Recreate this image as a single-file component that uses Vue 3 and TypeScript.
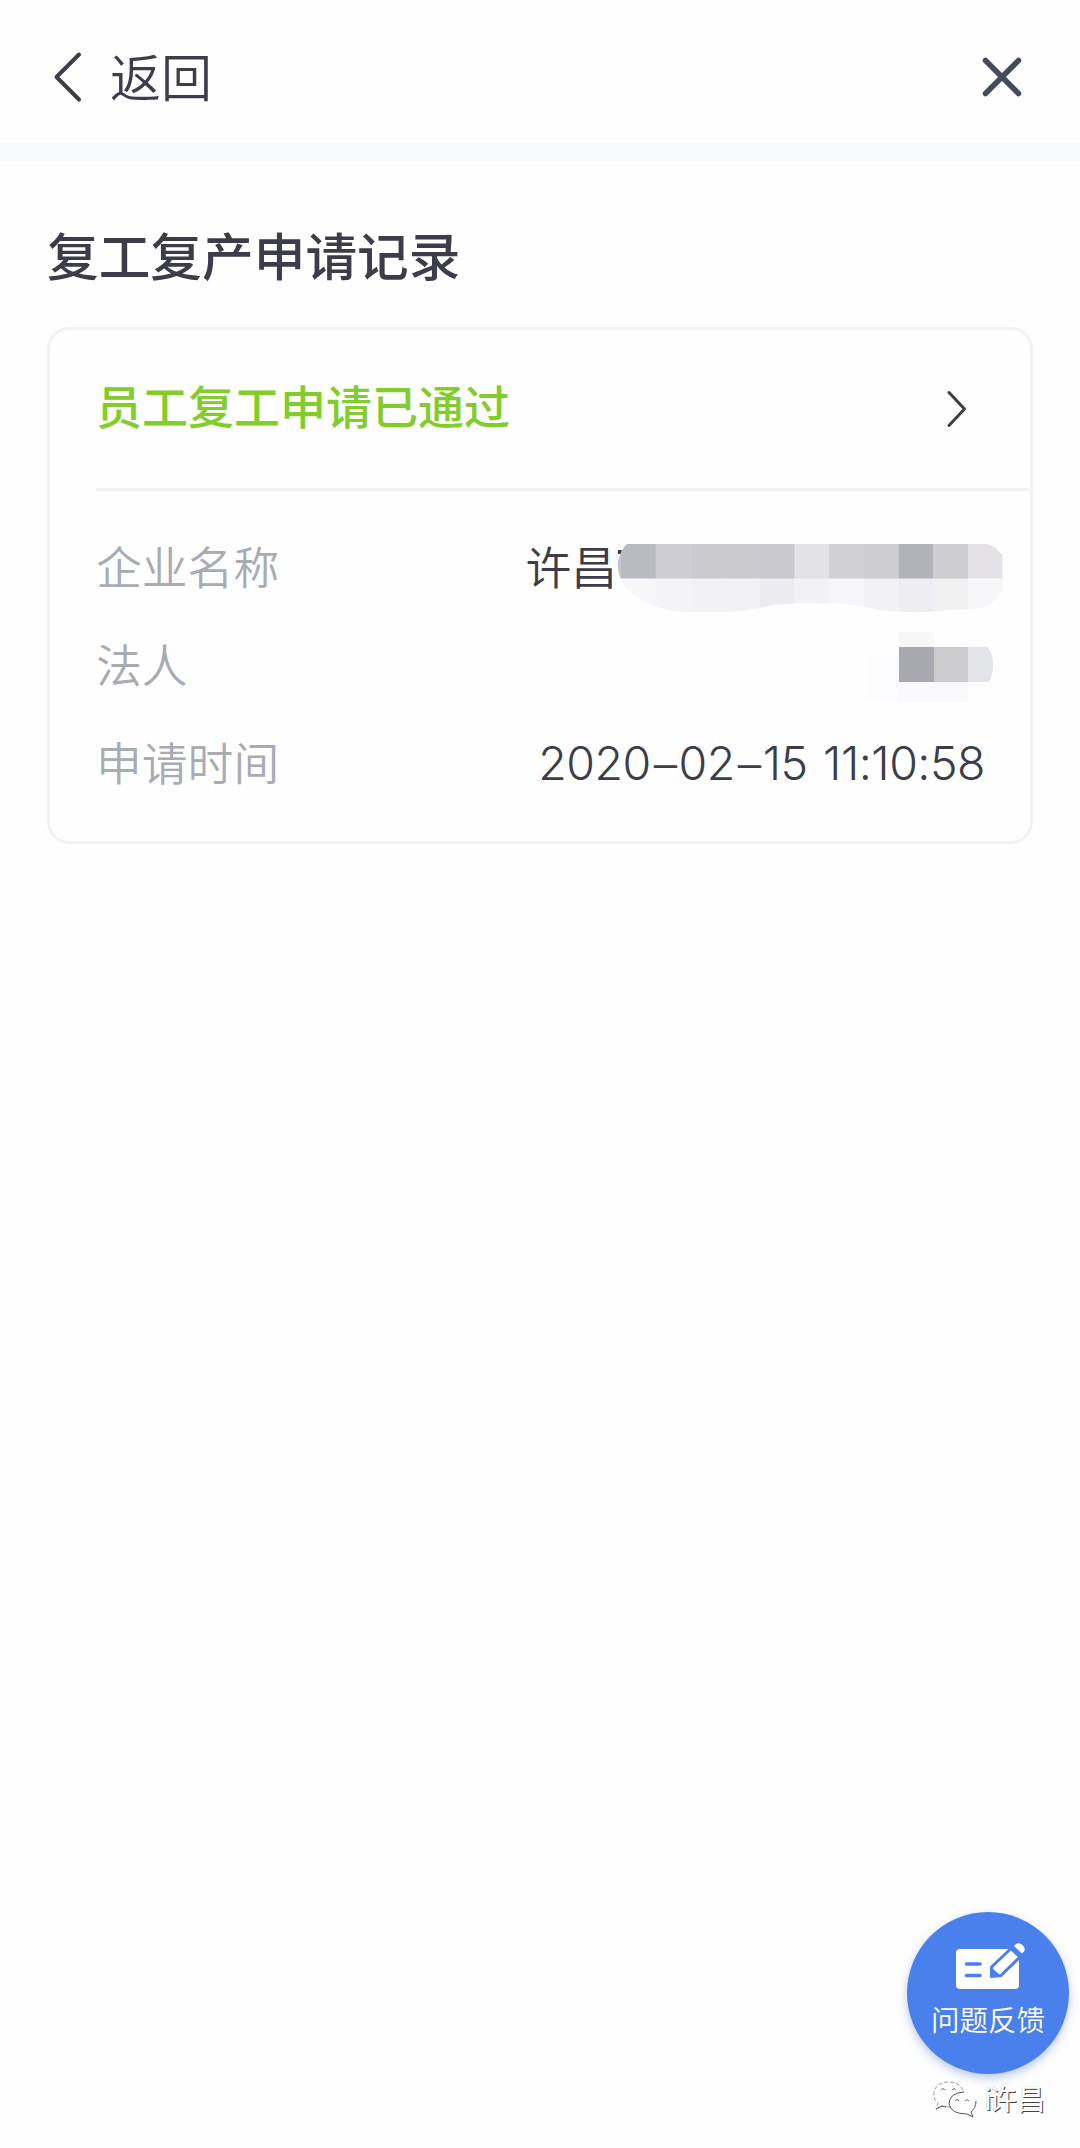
<script setup lang="ts">
interface Cell {
  x: number
  y: number
  w: number
  h: number
  fill: string
}

const step = 34.7
const cells = (x: number, y: number, h: number, fills: string[]): Cell[] =>
  fills.map((fill, i) => ({ x: x + i * step, y, w: step + 0.3, h, fill }))

// Masked company name, two rows of blocks clipped by a brush outline
const companyCells: Cell[] = [
  ...cells(4, 1, 35, ['#b9bbc2', '#cdccd2', '#cbcacf', '#cbcacf', '#c9c8ce', '#e3e2e7', '#d1d0d5', '#cdccd1', '#b1b3b8', '#cdcdd1', '#e5e2e7']),
  ...cells(4, 35.5, 36, ['#f7f7f9', '#f4f4f7', '#f2f2f4', '#f2f2f4', '#ebebf0', '#f2f2f4', '#f6f6f8', '#f2f2f6', '#eeeef2', '#f0f0f0', '#f7f7f9']),
]

const personCells: Cell[] = [
  { x: 33, y: 0, w: 35, h: 16, fill: '#f7f7f8' },
  { x: 1, y: 24, w: 33, h: 44, fill: '#fcfbfd' },
  { x: 33, y: 49, w: 69, h: 21, fill: '#f9f8fa' },
  { x: 33, y: 15, w: 35, h: 35, fill: '#a8a9ae' },
  { x: 68, y: 15, w: 34.4, h: 35, fill: '#cccccf' },
]
</script>

<template>
  <div class="page">
    <header class="bar">
      <div class="back">
        <svg class="chev" width="30" height="54" viewBox="0 0 30 54">
          <path d="M26 4.500L3.500 27L26 49.500" />
        </svg>
        <span>返回</span>
      </div>
      <svg class="close" width="42" height="42" viewBox="0 0 42 42">
        <path d="M4.500 4.500L37.500 37.500M37.500 4.500L4.500 37.500" />
      </svg>
    </header>
    <main>
      <h1>复工复产申请记录</h1>
      <section class="card">
        <div class="status">
          <span>员工复工申请已通过</span>
          <svg width="22" height="40" viewBox="0 0 22 40">
            <path d="M3 3.500L18.500 20L3 36.500" />
          </svg>
        </div>
        <dl>
          <div class="row company">
            <dt>企业名称</dt>
            <dd>
              <span>许昌</span>
              <svg width="386" height="72" viewBox="0 0 386 72">
                <defs>
                  <clipPath id="brush">
                    <path d="M10 1H370Q378 3 385.500 12V46Q378 63 360 66L330 67Q305 71 262 67Q235 60 205 60Q175 60 155 62Q130 69 102 69H65Q38 67 16 52Q8 46 4 36Q0 28 1 18Q4 6 10 1Z" />
                  </clipPath>
                </defs>
                <path class="stub" d="M1 9H5" />
                <g clip-path="url(#brush)">
                  <rect x="0" y="1" width="5" height="35" fill="#c4c5ca" />
                  <rect v-for="(c, i) in companyCells" :key="i" :x="c.x" :y="c.y" :width="c.w" :height="c.h" :fill="c.fill" />
                </g>
              </svg>
            </dd>
          </div>
          <div class="row person">
            <dt>法人</dt>
            <dd>
              <svg width="128" height="72" viewBox="0 0 128 72">
                <rect v-for="(c, i) in personCells" :key="i" :x="c.x" :y="c.y" :width="c.w" :height="c.h" :fill="c.fill" />
                <path d="M102.400 15H122Q132 31 123 50H102.400Z" fill="#e3e4e7" />
              </svg>
            </dd>
          </div>
          <div class="row time">
            <dt>申请时间</dt>
            <dd><div>2020<b>–</b>02<b>–</b>15 11:10:58</div></dd>
          </div>
        </dl>
      </section>
    </main>

    <button class="fab">
      <svg width="72" height="50" viewBox="0 0 72 50">
        <path d="M6 8H65V44Q65 48 61 48H6Q2 48 2 44V12Q2 8 6 8Z" fill="#fff" />
        <path d="M56 4L70 4V22L62 16Z" fill="#4a80ec" />
        <path d="M12.500 23H26M12.500 34.500H26" stroke="#4a80ec" stroke-width="3.600" stroke-linecap="round" />
        <path d="M37.500 26L57 7.500L66 16L47 34.500L37.500 35.500Z" fill="#fff" stroke="#4a80ec" stroke-width="3" stroke-linejoin="round" />
        <path d="M38 27L46 34L38 35.500Z" fill="#4a80ec" />
        <path d="M60 5L62 3Q65 1 68.500 4Q72 7.500 70 10.500L68 12.500Z" fill="#fff" />
      </svg>
      <span>问题反馈</span>
    </button>

    <div class="mark">
      <svg width="46" height="40" viewBox="0 0 46 40">
        <path d="M18 27Q13 27 10 26L4 29L6 23Q1 19 2 12Q4 3 16 2Q28 2 31 11" fill="#fff" stroke="#999" stroke-dasharray="4 2" />
        <path d="M17 23Q17 14 30 12Q43 14 44 23Q44 28 39 32L41 37L35 34Q18 37 17 23Z" fill="#fff" />
        <path d="M32 12Q17 13 17 24Q19 34 35 34L41 37L39 32Q44 28 44 21M4 29L10 26L14 27" fill="none" stroke="#555" />
        <path d="M9 10Q11 7 13 10M20 10Q22 7 24 10M23 21Q25 18 27 21M33 21Q35 18 37 21" fill="none" stroke="#666" />
      </svg>
      <span><i>i</i>许昌</span>
    </div>
  </div>
</template>

<style>
body {
  margin: 0;
  background: #fefefe;
}
</style>

<style scoped>
.page {
  width: 1080px;
  height: 2148px;
  position: relative;
  overflow: hidden;
  background: #fefefe;
  color: #3c3d49;
  font-family: "Noto Sans CJK SC", sans-serif;
}
svg {
  display: block;
  flex: none;
}
.bar {
  box-sizing: border-box;
  height: 162px;
  border-bottom: 20px solid #f7f9fd;
  padding: 12px 57px 0 53px;
  display: flex;
  align-items: center;
  justify-content: space-between;
}
.back {
  display: flex;
  align-items: center;
  gap: 27px;
  font-size: 51px;
  line-height: 76px;
  font-weight: 350;
}
.back span {
  margin-top: -5px;
}
.chev path,
.close path,
.status path {
  fill: none;
  stroke: #3c3d47;
  stroke-width: 4;
  stroke-linecap: round;
  stroke-linejoin: round;
}
.close path {
  stroke: #464b5c;
  stroke-width: 5.5;
}
.status path {
  stroke-width: 3;
}
main {
  padding: 54px 47px 0;
}
h1 {
  margin: 0 0 35px;
  font-size: 51.7px;
  line-height: 76px;
  font-weight: 500;
}
.card {
  box-sizing: border-box;
  width: 986px;
  height: 517px;
  border: 3px solid #f2f2f4;
  border-radius: 22px;
  padding-left: 46px;
}
.status {
  box-sizing: border-box;
  height: 161px;
  border-bottom: 3px solid #f2f2f4;
  padding-right: 62.5px;
  display: flex;
  align-items: center;
  justify-content: space-between;
  color: #82cd2c;
  font-size: 46px;
  font-weight: 500;
}
.status span {
  margin-top: -11px;
}
dl {
  margin: 0;
  padding-top: 29px;
}
.row {
  height: 98px;
  display: flex;
  align-items: center;
  justify-content: space-between;
  font-size: 45.8px;
}
dt {
  margin-top: -8px;
  color: #a9abb3;
  font-weight: 350;
}
dd {
  margin: 0;
  display: flex;
  align-items: center;
}
.company dd {
  padding-right: 27px;
}
.company dd span {
  margin-top: -8px;
  font-weight: 350;
}
.stub {
  stroke: #3c3d49;
  stroke-width: 4;
}
.company svg {
  margin-top: 20px;
}
.person dd {
  padding-top: 2px;
  padding-right: 36px;
}
.time dd {
  margin-top: -4px;
  padding-right: 45px;
  font-family: Inter, "Noto Sans CJK SC", sans-serif;
  font-size: 46.5px;
  letter-spacing: -0.5px;
  word-spacing: 3px;
  font-weight: 350;
}
.time b {
  margin: 0 2px 0 3px;
  font-family: "Liberation Sans", sans-serif;
  font-size: 42px;
  line-height: 1;
  font-weight: 400;
  vertical-align: 3px;
}
.fab {
  position: absolute;
  left: 907px;
  top: 1912px;
  width: 162px;
  height: 162px;
  border: 0;
  border-radius: 50%;
  padding: 29px 0 0;
  background: #4a80ec;
  color: #fff;
  box-shadow: 0 4px 10px rgba(60, 100, 190, 0.35);
  display: flex;
  flex-direction: column;
  align-items: center;
  font-family: "Noto Sans CJK SC", sans-serif;
  font-size: 28.5px;
  line-height: 42px;
  font-weight: 350;
}
.fab svg {
  margin-left: 4px;
}
.fab span {
  margin-top: 7px;
}
.mark {
  position: absolute;
  left: 932px;
  top: 2080px;
  display: flex;
  align-items: center;
  gap: 6px;
  color: #fff;
  font-size: 28.5px;
  line-height: 38px;
  text-shadow: 1px 1px 0 #444, 0 0 1px #aaa;
}
.mark span {
  margin-top: -4px;
}
.mark i {
  font-style: normal;
  letter-spacing: -3.5px;
}
</style>
